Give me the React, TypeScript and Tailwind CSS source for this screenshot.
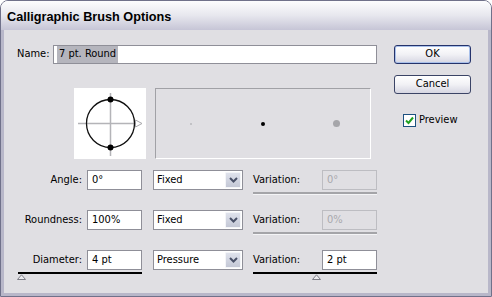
const uiFont = "font-['DejaVu_Sans_Condensed','Liberation_Sans',sans-serif]";

function Thumb({ className }: { className?: string }) {
  return (
    <svg width="9" height="6" viewBox="0 0 9 6" className={className}>
      <polygon points="0.5,5.5 4.5,0.8 8.5,5.5" fill="#ececf0" stroke="#7d7d86" strokeWidth="1" />
    </svg>
  );
}

function Select({ value }: { value: string }) {
  return (
    <div className="ml-[11px] flex h-[20px] w-[90px] border border-[#8f8f98] bg-white">
      <div className="flex flex-1 items-center pl-[3px]">{value}</div>
      <div className="m-px flex w-[16px] items-center justify-center rounded-[1px] border border-[#f4f5f8] bg-gradient-to-b from-[#dfe2ec] to-[#c4c8d6]">
        <svg width="9" height="6" viewBox="0 0 9 6">
          <path d="M1 1 L4.5 4.5 L8 1" fill="none" stroke="#4a5168" strokeWidth="2" />
        </svg>
      </div>
    </div>
  );
}

type Slider = 'none' | 'gray' | 'active';

function ParamRow({
  label,
  value,
  mode,
  variation,
  slider,
}: {
  label: string;
  value: string;
  mode: string;
  variation: string;
  slider: Slider;
}) {
  const active = slider === 'active';
  return (
    <div className="flex h-[40px]">
      <div className="ml-px flex w-[124px] flex-col">
        <div className="flex h-[20px] items-center">
          <div className="w-[64px] text-right">{label}</div>
          <div className="ml-[5px] flex h-[20px] w-[55px] items-center border border-[#8f8f98] bg-white pl-[4px]">{value}</div>
        </div>
        {active && (
          <>
            <div className="mt-[2px] h-[2px] w-full bg-black" />
            <Thumb className="-ml-px" />
          </>
        )}
      </div>
      <Select value={mode} />
      <div className="ml-[10px] flex w-[124px] flex-col">
        <div className="flex h-[20px] items-center">
          <div className="w-[69px]">Variation:</div>
          {active ? (
            <div className="flex h-[20px] w-[55px] items-center border border-[#8f8f98] bg-white pl-[4px]">{variation}</div>
          ) : (
            <div className="flex h-[20px] w-[55px] items-center border border-[#bdbdc2] pl-[4px] text-[#a9a9ad]">{variation}</div>
          )}
        </div>
        {active ? (
          <>
            <div className="mt-[2px] h-[2px] w-full bg-black" />
            <Thumb className="ml-[59px]" />
          </>
        ) : (
          <>
            <div className="mt-[2px] h-[2px] w-full bg-[#a4a4a8]" />
            <div className="h-px w-full bg-[#f4f4f6]" />
          </>
        )}
      </div>
    </div>
  );
}

function Button({ label, primary }: { label: string; primary?: boolean }) {
  return (
    <div
      className={
        'flex h-[19px] w-[77px] items-center justify-center rounded-[3px] border bg-gradient-to-b from-[#ffffff] via-[#f1f1f5] to-[#d6d6e2] ' +
        (primary ? 'border-[#25336b] shadow-[inset_0_0_0_1px_#a9c0ea]' : 'border-[#3b4466]')
      }
    >
      {label}
    </div>
  );
}

export default function App() {
  return (
    <div className={`h-[297px] w-[492px] bg-white text-[11px] text-black ${uiFont}`}>
      <div className="flex h-full flex-col overflow-hidden rounded-t-[8px] border border-[#70718a]">
        <div className="flex h-[29px] shrink-0 items-center bg-gradient-to-b from-[#fdfdfe] via-[#e7e7ee] to-[#c6c5d6] pl-[6px] pt-[4px] font-['Liberation_Sans',sans-serif] text-[12.7px] font-bold">
          Calligraphic Brush Options
        </div>
        <div className="flex flex-1 border-x-[3px] border-b-[3px] border-[#b8b7c9] bg-[#e0dfe3] pl-[13px] pt-[15px]">
          <div className="flex w-[360px] flex-col">
            <div className="flex h-[19px] items-center">
              <div className="w-[32px]">Name:</div>
              <div className="ml-[4px] flex h-[19px] flex-1 items-center border border-[#8f8f98] bg-white pl-[3px]">
                <span className="bg-[#b5b5bd] px-[2px]">7 pt. Round</span>
              </div>
            </div>

            <div className="mt-[24px] flex">
              <div className="ml-[57px] h-[71px] w-[72px] bg-white">
                <svg width="72" height="71" viewBox="0 0 72 71">
                  <line x1="4" y1="35.5" x2="62" y2="35.5" stroke="#b4b4b8" strokeWidth="1.5" />
                  <line x1="36.5" y1="5" x2="36.5" y2="68" stroke="#b4b4b8" strokeWidth="1.5" />
                  <polygon points="61.5,32 68,35.5 61.5,39" fill="white" stroke="#a8a8ac" strokeWidth="1" />
                  <circle cx="36.5" cy="35.5" r="24" fill="none" stroke="#111" strokeWidth="1.3" />
                  <circle cx="36.5" cy="11.5" r="3" fill="#000" />
                  <circle cx="36.5" cy="59.5" r="3" fill="#000" />
                </svg>
              </div>
              <div className="ml-[9px] flex h-[71px] w-[216px] items-center border border-b-white border-l-[#a1a1a6] border-r-white border-t-[#a1a1a6]">
                <div className="ml-[34px] h-[2px] w-[2px] rounded-full bg-[#b8b8bc]" />
                <div className="ml-[69px] h-[4px] w-[4px] rounded-full bg-black" />
                <div className="ml-[68px] h-[7px] w-[7px] rounded-full bg-[#a6a6aa]" />
              </div>
            </div>

            <div className="mt-[11px] flex flex-col">
              <ParamRow label="Angle:" value="0°" mode="Fixed" variation="0°" slider="gray" />
              <ParamRow label="Roundness:" value="100%" mode="Fixed" variation="0%" slider="gray" />
              <ParamRow label="Diameter:" value="4 pt" mode="Pressure" variation="2 pt" slider="active" />
            </div>
          </div>

          <div className="ml-[17px] flex w-[77px] flex-col">
            <Button label="OK" primary />
            <div className="mt-[11px]">
              <Button label="Cancel" />
            </div>
            <div className="ml-[9px] mt-[18px] flex items-center">
              <div className="flex h-[13px] w-[13px] items-center justify-center border border-[#1c5180] bg-white">
                <svg width="9" height="9" viewBox="0 0 9 9">
                  <path d="M1 4.5 L3.5 7 L8 1.5" fill="none" stroke="#21a121" strokeWidth="2" />
                </svg>
              </div>
              <div className="ml-[3px]">Preview</div>
            </div>
          </div>
        </div>
      </div>
    </div>
  );
}
